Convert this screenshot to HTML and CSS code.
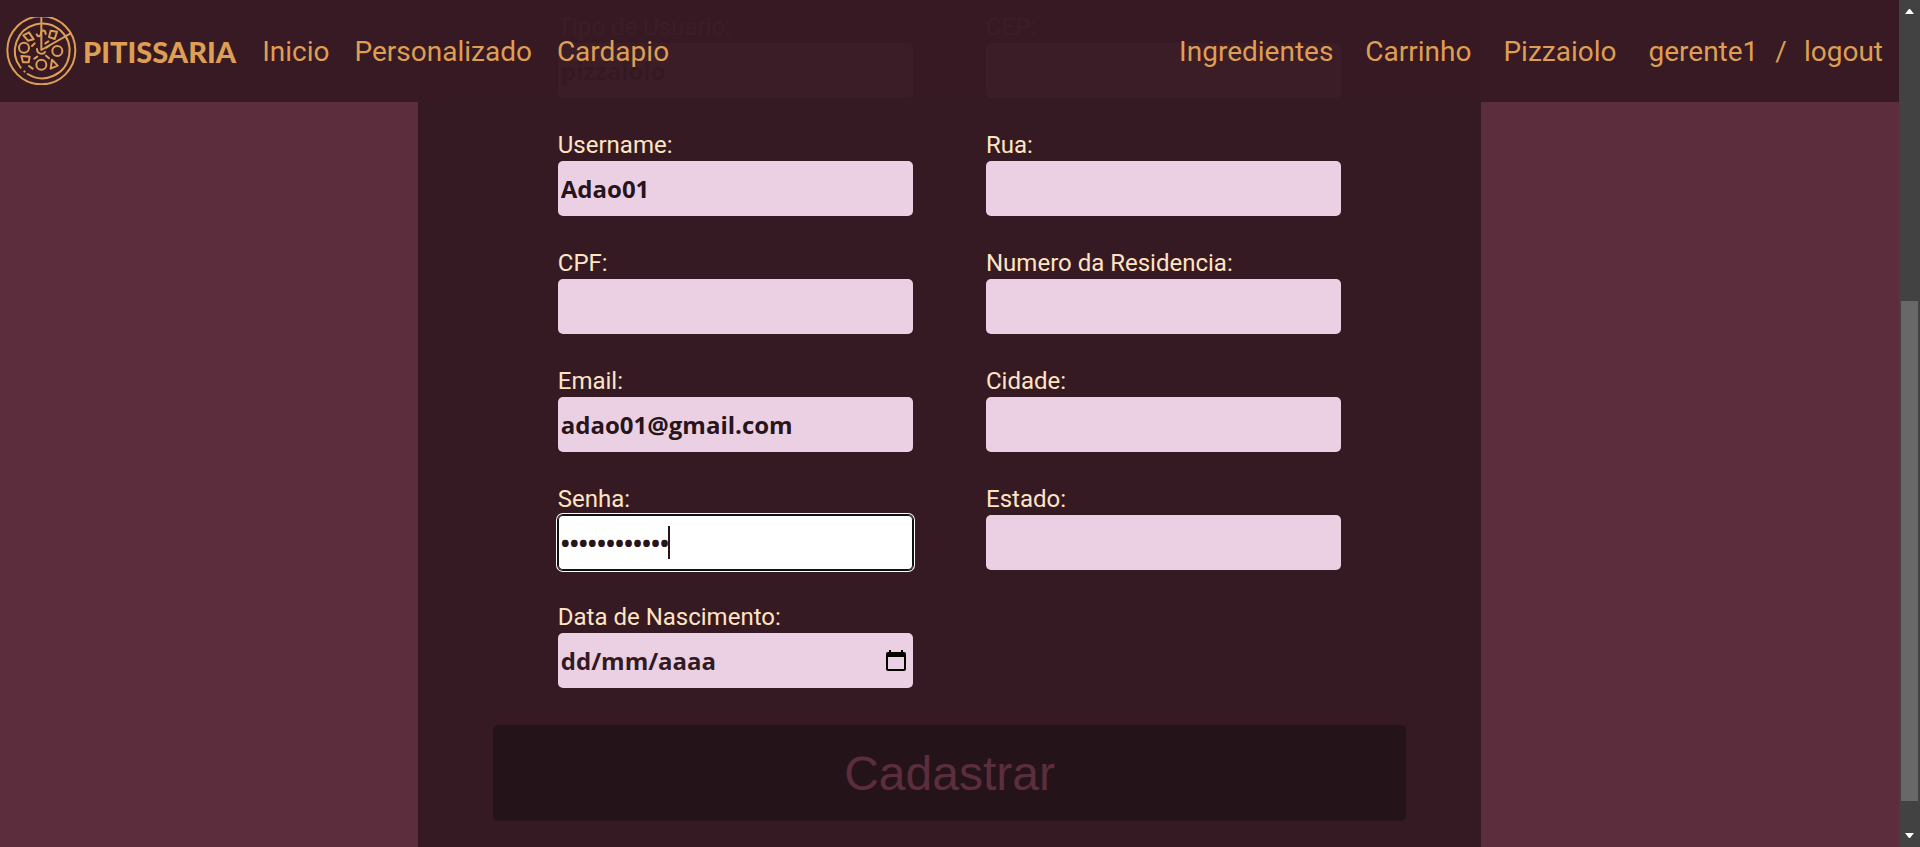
FILE: index.html
```html
<!DOCTYPE html>
<html lang="pt-BR">
<head>
<meta charset="utf-8">
<title>Pitissaria - Cadastro</title>
<link rel="stylesheet" href="styles.css">
</head>
<body>
<div class="page">
  <header class="navbar">
    <a class="brand" href="#">
      <svg class="brand-icon" viewBox="15 51 216 204" fill="none" stroke="currentColor" stroke-width="6" stroke-linecap="round" stroke-linejoin="round" aria-hidden="true">
        <circle cx="124" cy="151" r="102"/>
        <path d="M83 222A82 82 0 1 0 62 203"/>
        <path d="M73 214l1 1"/>
        <path d="M124 51V150L212 100"/>
        <circle cx="72" cy="143" r="15"/>
        <circle cx="172" cy="153" r="15"/>
        <circle cx="124" cy="194" r="15"/>
        <path d="M70 106L87 97L101 118L84 122ZM152 92L171 95L164 117L147 111ZM64 168L89 170L86 187L69 187ZM156 179L173 197L152 206Z"/>
        <path d="M96 138l8-8M136 130l9-6M139 143l9-6M103 176l9-6M138 167l9 8M87 198l11 8"/>
        <path d="M110 103c4 10 13 6 13-3c0-12 14-12 14 2M111 147c0 16 20 18 24 9"/>
      </svg>
      <span class="brand-name">PITISSARIA</span>
    </a>
    <nav class="links">
      <a href="#">Inicio</a>
      <a href="#">Personalizado</a>
      <a href="#">Cardapio</a>
    </nav>
    <nav class="links links-user">
      <a href="#">Ingredientes</a>
      <a href="#">Carrinho</a>
      <a href="#">Pizzaiolo</a>
      <span class="account"><a href="#">gerente1</a><span>/</span><a href="#">logout</a></span>
    </nav>
  </header>
  <main class="panel">
    <form class="form">
      <div class="fields">
        <div class="column">
          <div class="field"><label for="tipo">Tipo de Usuario:</label><select id="tipo"><option>pizzaiolo</option></select></div>
          <div class="field"><label for="username">Username:</label><input id="username" type="text" value="Adao01"></div>
          <div class="field"><label for="cpf">CPF:</label><input id="cpf" type="text"></div>
          <div class="field"><label for="email">Email:</label><input id="email" type="email" value="adao01@gmail.com"></div>
          <div class="field">
            <label for="senha">Senha:</label>
            <div class="control"><input id="senha" type="password" value="pitissaria01" autofocus><span class="caret"></span></div>
          </div>
          <div class="field">
            <label for="nascimento">Data de Nascimento:</label>
            <div class="control">
              <input id="nascimento" type="text" placeholder="dd/mm/aaaa">
              <button class="date-button" type="button" aria-label="Abrir calendário">
                <svg viewBox="0 0 20 21" width="20" height="21" aria-hidden="true"><path fill="currentColor" fill-rule="evenodd" d="M3 0h2v2h10V0h2v2h1a2 2 0 0 1 2 2v15a2 2 0 0 1-2 2H2a2 2 0 0 1-2-2V4a2 2 0 0 1 2-2h1zM2 7v12h16V7z"/></svg>
              </button>
            </div>
          </div>
        </div>
        <div class="column">
          <div class="field"><label for="cep">CEP:</label><input id="cep" type="text"></div>
          <div class="field"><label for="rua">Rua:</label><input id="rua" type="text"></div>
          <div class="field"><label for="numero">Numero da Residencia:</label><input id="numero" type="text"></div>
          <div class="field"><label for="cidade">Cidade:</label><input id="cidade" type="text"></div>
          <div class="field"><label for="estado">Estado:</label><input id="estado" type="text"></div>
        </div>
      </div>
      <button class="submit" type="submit">Cadastrar</button>
    </form>
  </main>
</div>
<div class="scrollbar" aria-hidden="true">
  <svg class="arrow" viewBox="0 0 9 5"><path fill="currentColor" d="M0 5h9L5 0H4z"/></svg>
  <div class="track"><div class="thumb"></div></div>
  <svg class="arrow" viewBox="0 0 9 5"><path fill="currentColor" d="M0 0h9L5 5H4z"/></svg>
</div>
</body>
</html>
```
FILE: styles.css
```css
* {
  box-sizing: border-box;
}

body {
  margin: 0;
  height: 100vh;
  display: flex;
  overflow: hidden;
  background: #5c2d3c;
  font-family: Roboto, sans-serif;
}

.page {
  position: relative;
  flex: 1;
  display: flex;
  justify-content: center;
}

.navbar {
  position: absolute;
  inset: 0 0 auto;
  z-index: 1;
  height: 102px;
  padding: 0 16px 0 5px;
  display: flex;
  align-items: center;
  background: rgba(54, 26, 35, 0.98);
  color: #de9e54;
  font-size: 28px;
}

.navbar a {
  color: inherit;
  text-decoration: none;
}

.brand {
  display: flex;
  align-items: center;
  gap: 6px;
  margin-right: 26px;
}

.brand-icon {
  width: 72px;
  height: 68px;
}

.brand-name {
  font-family: Lato, sans-serif;
  font-size: 29px;
  font-weight: 900;
}

.links {
  display: flex;
  gap: 25px;
}

.links-user {
  margin-left: auto;
  gap: 32px;
}

.account {
  display: flex;
  gap: 17px;
}

.panel {
  width: 56%;
  padding: 15px 75px 0;
  background: #361a23;
}

.form {
  display: flex;
  flex-direction: column;
  gap: 37px;
}

.fields {
  display: grid;
  grid-template-columns: 1fr 1fr;
  gap: 73px;
  padding: 0 65px;
}

.column {
  display: flex;
  flex-direction: column;
  gap: 35px;
}

.field {
  display: flex;
  flex-direction: column;
}

.field label {
  padding-bottom: 3px;
  color: #ffe4c4;
  font-size: 24px;
  line-height: 25px;
}

.field input,
.field select {
  width: 100%;
  height: 55px;
  padding: 1px 3px;
  border: 0;
  border-radius: 5px;
  background: #ebd0e3;
  color: #28141b;
  font-family: "Open Sans", sans-serif;
  font-size: 24px;
  font-weight: 700;
  appearance: none;
}

.field input:focus {
  background: #fff;
  caret-color: transparent;
  outline: 0;
  box-shadow: inset 0 0 0 1px #101010, 0 0 0 1px #101010, 0 0 0 2px #fff;
}

.control {
  position: relative;
}

.control input::placeholder {
  color: #321a23;
}

.caret {
  position: absolute;
  top: 11px;
  left: 110px;
  width: 2px;
  height: 33px;
  background: #28141b;
}

.date-button {
  position: absolute;
  top: 0;
  right: 7px;
  height: 100%;
  padding: 0;
  display: flex;
  align-items: center;
  border: 0;
  background: none;
  color: #000;
}

.submit {
  height: 96px;
  border: 0;
  border-radius: 5px;
  background: #241419;
  color: #5c2d3c;
  font-family: "Liberation Sans", sans-serif;
  font-size: 48px;
}

.scrollbar {
  width: 21px;
  padding: 9px 2px;
  display: flex;
  flex-direction: column;
  align-items: center;
  background: #424242;
  color: #fff;
}

.arrow {
  width: 9px;
  height: 5px;
}

.track {
  flex: 1;
  width: 17px;
}

.thumb {
  height: 500px;
  margin-top: 287px;
  background: #686868;
}
```
